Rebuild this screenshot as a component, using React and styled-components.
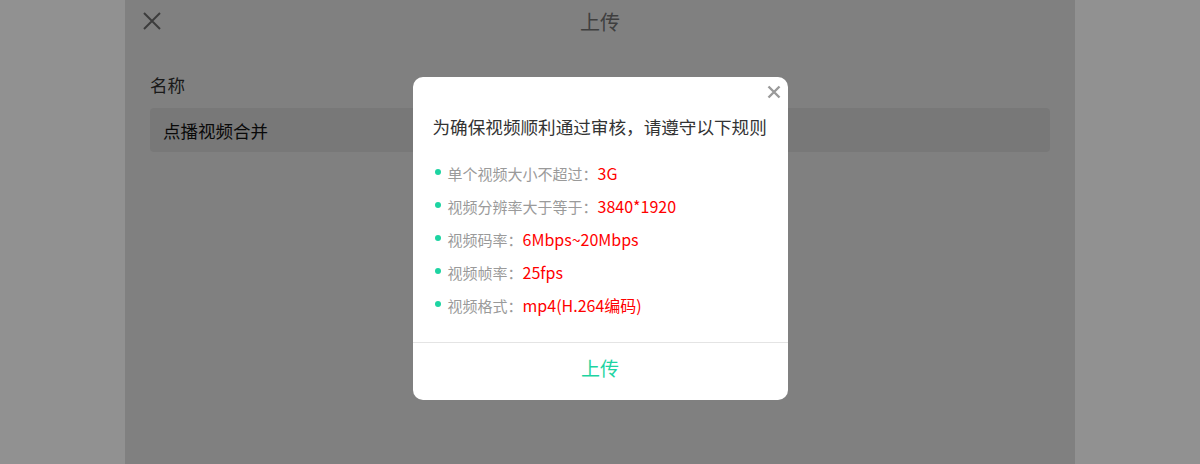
import { createGlobalStyle, styled } from "styled-components";

const GlobalStyle = createGlobalStyle`
  html, body {
    margin: 0;
    padding: 0;
    background: #ffffff;
    font-family: "Noto Sans CJK SC", "Noto Sans", sans-serif;
  }
`;

const Screen = styled.div`
  display: flex;
  justify-content: center;
  height: 464px;
  overflow: hidden;
`;

const Page = styled.div`
  width: 950px;
  background: #e1e1e1;
  display: flex;
  flex-direction: column;
`;

const Header = styled.div`
  display: grid;
  grid-template-columns: 56px 1fr 56px;
  align-items: center;
  height: 42px;
`;

const HeaderClose = styled.button`
  border: 0;
  background: none;
  padding: 0 0 0 17px;
  display: flex;
  align-items: center;
  color: #6a6a6a;
`;

const HeaderTitle = styled.div`
  text-align: center;
  font-size: 20px;
  color: #707070;
`;

const Form = styled.div`
  padding: 30px 25px 0;
  display: flex;
  flex-direction: column;
  gap: 10px;
`;

const Label = styled.div`
  font-size: 17.5px;
  line-height: 26px;
  color: #2e2e2e;
`;

const TextField = styled.div`
  height: 44px;
  border-radius: 4px;
  background: #d3d3d3;
  display: flex;
  align-items: center;
  padding: 0 13px;
  font-size: 17.5px;
  color: #111;
`;

const Overlay = styled.div`
  position: fixed;
  inset: 0;
  background: rgba(0, 0, 0, 0.43);
  display: flex;
  justify-content: center;
  align-items: flex-start;
  padding-top: 77px;
`;

const Dialog = styled.div`
  position: relative;
  width: 375px;
  background: #fff;
  border-radius: 10px;
  display: flex;
  flex-direction: column;
`;

const DialogClose = styled.button`
  position: absolute;
  top: 7px;
  right: 6px;
  border: 0;
  background: none;
  padding: 0;
  display: flex;
  color: #9a9a9a;
`;

const DialogBody = styled.div`
  padding: 38px 20px 26px;
`;

const DialogTitle = styled.div`
  font-size: 17.6px;
  line-height: 24px;
  color: #333;
  margin-bottom: 23px;
`;

const RuleList = styled.ul`
  list-style: none;
  margin: 0;
  padding: 0;
  display: flex;
  flex-direction: column;
  gap: 11px;
`;

const Rule = styled.li`
  display: flex;
  align-items: center;
  height: 22px;
  padding-left: 2px;
  gap: 7px;
`;

const Dot = styled.span`
  width: 6px;
  height: 6px;
  border-radius: 50%;
  background: #1dd4a2;
  margin-top: -3px;
`;

const RuleName = styled.span`
  font-size: 15px;
  color: #9a9a9a;
`;

const RuleValue = styled.span`
  font-size: 16px;
  color: #ff0000;
`;

const Footer = styled.button`
  border: 0;
  border-top: 1px solid #e4e4e4;
  background: none;
  height: 58px;
  padding: 0 0 8px;
  font-family: inherit;
  font-size: 19px;
  color: #1dd4a2;
  cursor: pointer;
`;

const rules = [
  ["单个视频大小不超过：", "3G"],
  ["视频分辨率大于等于：", "3840*1920"],
  ["视频码率：", "6Mbps~20Mbps"],
  ["视频帧率：", "25fps"],
  ["视频格式：", "mp4(H.264编码)"],
];

export default function App() {
  return (
    <>
      <GlobalStyle />
      <Screen>
        <Page>
          <Header>
            <HeaderClose>
              <svg width="20" height="20" viewBox="0 0 20 20">
                <path d="M2 2L18 18M18 2L2 18" stroke="currentColor" strokeWidth="2" />
              </svg>
            </HeaderClose>
            <HeaderTitle>上传</HeaderTitle>
            <span />
          </Header>
          <Form>
            <Label>名称</Label>
            <TextField>点播视频合并</TextField>
          </Form>
        </Page>
      </Screen>
      <Overlay>
        <Dialog>
          <DialogClose>
            <svg width="16" height="16" viewBox="0 0 16 16">
              <path d="M2.5 2.5L13.5 13.5M13.5 2.5L2.5 13.5" stroke="currentColor" strokeWidth="2.4" />
            </svg>
          </DialogClose>
          <DialogBody>
            <DialogTitle>为确保视频顺利通过审核，请遵守以下规则</DialogTitle>
            <RuleList>
              {rules.map(([name, value]) => (
                <Rule key={name}>
                  <Dot />
                  <span>
                    <RuleName>{name}</RuleName>
                    <RuleValue>{value}</RuleValue>
                  </span>
                </Rule>
              ))}
            </RuleList>
          </DialogBody>
          <Footer>上传</Footer>
        </Dialog>
      </Overlay>
    </>
  );
}
